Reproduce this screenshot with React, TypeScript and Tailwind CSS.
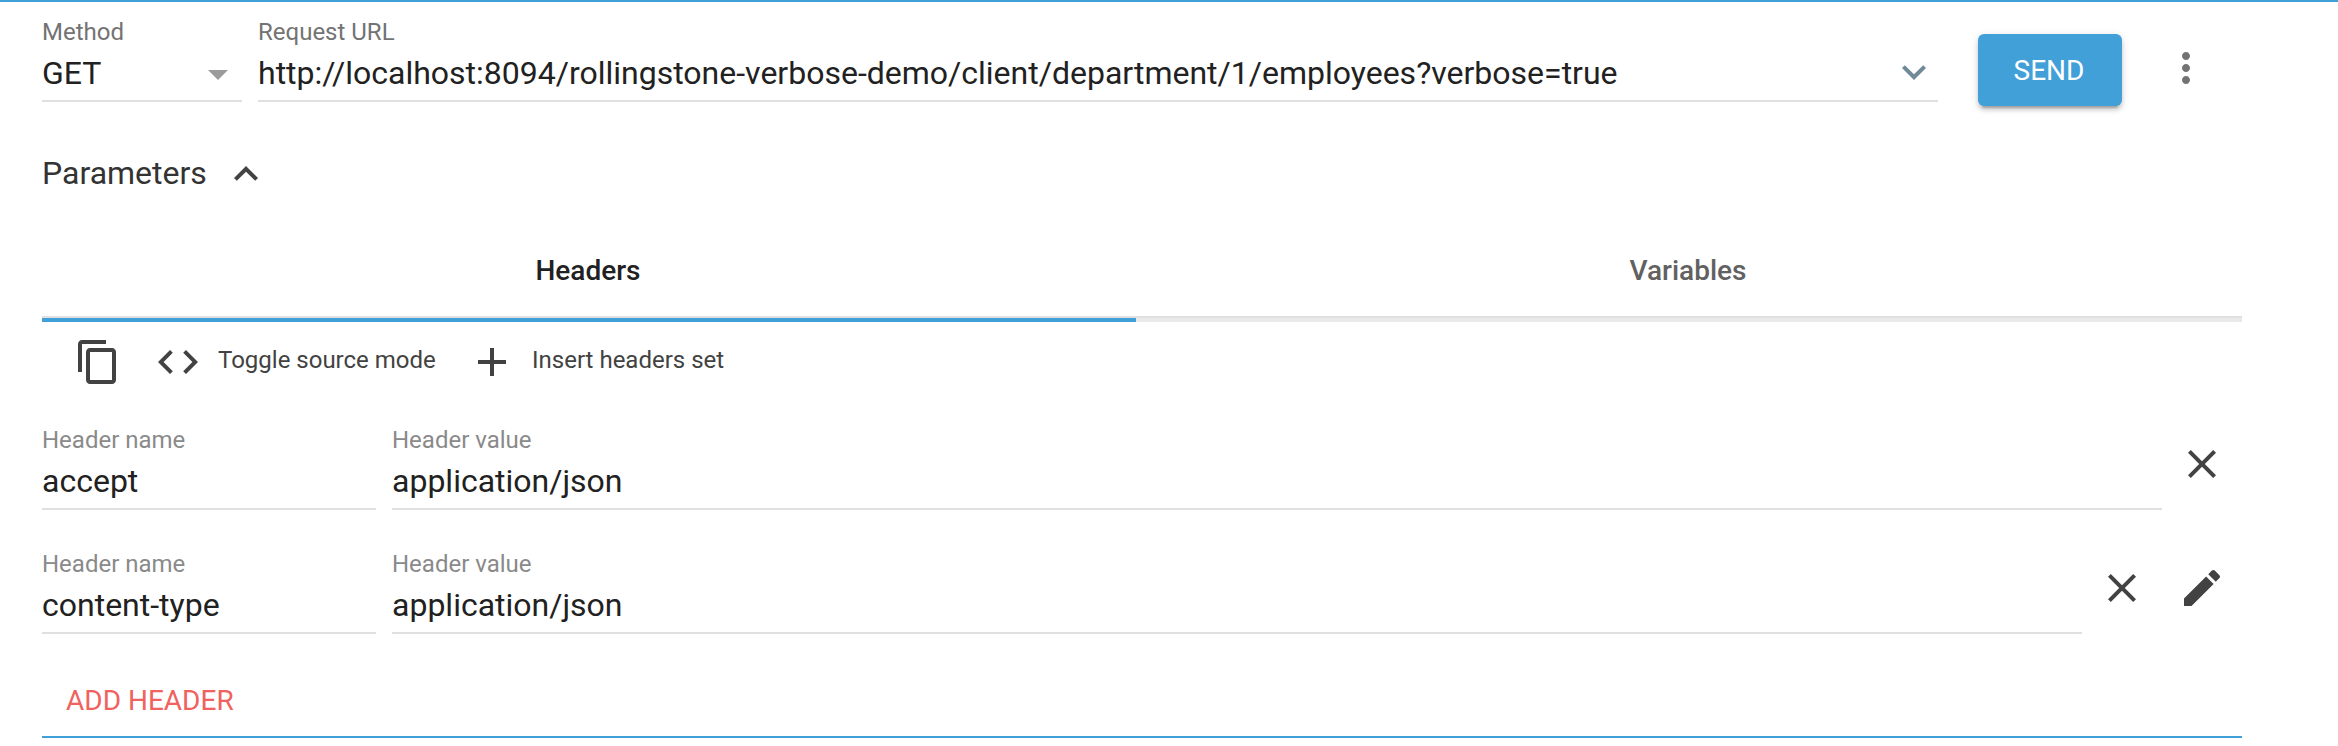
import type { ReactNode } from "react";

const icons = {
  dropDown: "M7 10l5 5 5-5z",
  expandMore: "M16.59 8.59L12 13.17 7.41 8.59 6 10l6 6 6-6z",
  expandLess: "M12 8l-6 6 1.41 1.41L12 10.83l4.59 4.58L18 14z",
  more:
    "M12 8c1.1 0 2-.9 2-2s-.9-2-2-2-2 .9-2 2 .9 2 2 2zm0 2c-1.1 0-2 .9-2 2s.9 2 2 2 2-.9 2-2-.9-2-2-2zm0 6c-1.1 0-2 .9-2 2s.9 2 2 2 2-.9 2-2-.9-2-2-2z",
  copy:
    "M16 1H4c-1.1 0-2 .9-2 2v14h2V3h12V1zm3 4H8c-1.1 0-2 .9-2 2v14c0 1.1.9 2 2 2h11c1.1 0 2-.9 2-2V7c0-1.1-.9-2-2-2zm0 16H8V7h11v14z",
  code:
    "M9.4 16.6L4.8 12l4.6-4.6L8 6l-6 6 6 6 1.4-1.4zm5.2 0l4.6-4.6-4.6-4.6L16 6l6 6-6 6-1.4-1.4z",
  add: "M19 13h-6v6h-2v-6H5v-2h6V5h2v6h6v2z",
  close:
    "M19 6.41L17.59 5 12 10.59 6.41 5 5 6.41 10.59 12 5 17.59 6.41 19 12 13.41 17.59 19 19 17.59 13.41 12z",
  edit:
    "M3 17.25V21h3.75L17.81 9.94l-3.75-3.75L3 17.25zM20.71 7.04c.39-.39.39-1.02 0-1.41l-2.34-2.34c-.39-.39-1.02-.39-1.41 0l-1.83 1.83 3.75 3.75 1.83-1.83z",
};

function Icon({ name, className = "" }: { name: keyof typeof icons; className?: string }) {
  return (
    <svg viewBox="0 0 24 24" className={`size-12 shrink-0 fill-current ${className}`}>
      <path d={icons[name]} />
    </svg>
  );
}

type FieldProps = {
  label: string;
  value: string;
  className: string;
  labelClass?: string;
  children?: ReactNode;
};

function Field({ label, value, className, labelClass = "text-[#737373]", children }: FieldProps) {
  return (
    <div className={`border-b-2 border-[#e0e0e0] pb-[3px] ${className}`}>
      <div className={`text-2xl leading-[34px] ${labelClass}`}>{label}</div>
      <div className="flex h-12 justify-between text-[32px] leading-[48px]">
        <span>{value}</span>
        {children}
      </div>
    </div>
  );
}

function HeaderRow({ name, value, editable }: { name: string; value: string; editable?: boolean }) {
  return (
    <div className="flex h-[87px] w-[2184px]">
      <Field label="Header name" value={name} className="w-[334px]" labelClass="text-[#8a8a8a]" />
      <Field label="Header value" value={value} className="ml-4 flex-1" labelClass="text-[#8a8a8a]" />
      <div className="ml-4 flex gap-8 pt-[17px] text-[#424242]">
        <Icon name="close" />
        {editable && <Icon name="edit" />}
      </div>
    </div>
  );
}

export default function App() {
  return (
    <main className="h-[746px] w-[2338px] overflow-hidden border-t-2 border-[#42a0d9] bg-white pl-[42px] font-['Roboto',sans-serif] text-[#212121]">
      <section className="flex items-start pt-[13px]">
        <Field label="Method" value="GET" className="w-[200px]">
          <Icon name="dropDown" className="mt-px text-[#9b9b9b]" />
        </Field>
        <Field
          label="Request URL"
          value="http://localhost:8094/rollingstone-verbose-demo/client/department/1/employees?verbose=true"
          className="ml-4 w-[1680px]"
        >
          <Icon name="expandMore" className="-mt-px text-[#708a98]" />
        </Field>
        <button className="mt-[19px] ml-10 h-[72px] w-36 rounded-md bg-[#42a0d9] pt-0.5 pr-0.5 text-[28px] leading-[70px] text-white shadow-[0_4px_4px_rgba(0,0,0,0.14),0_2px_10px_rgba(0,0,0,0.12),0_6px_2px_-4px_rgba(0,0,0,0.2)]">
          SEND
        </button>
        <Icon name="more" className="mt-[29px] ml-10 text-[#737373]" />
      </section>

      <section className="mt-11 flex h-12 items-center gap-4 text-[#333333]">
        <h2 className="-mt-0.5 w-[164px] text-[32px] leading-[48px]">Parameters</h2>
        <Icon name="expandLess" className="text-[#424242]" />
      </section>

      <nav className="mt-[22px] flex h-[102px] w-[2200px] text-center text-[28px] font-medium leading-[102px]">
        <div className="h-[102px] w-[1094px] border-b-4 border-[#42a0d9]">
          <div className="h-[98px] border-b-2 border-[#e0e0e0] pr-0.5">Headers</div>
        </div>
        <div className="h-[102px] flex-1 border-b-4 border-[#e8e9e9] text-[#616161]">
          <div className="h-[98px] border-b-2 border-[#e0e0e0] pr-0.5">Variables</div>
        </div>
      </nav>

      <section className="mt-4 flex h-12 pl-8 text-2xl leading-[44px] text-[#424242]">
        <Icon name="copy" />
        <Icon name="code" className="ml-8" />
        <span className="ml-4 w-[218px] whitespace-nowrap">Toggle source mode</span>
        <Icon name="add" className="ml-8" />
        <span className="ml-4">Insert headers set</span>
      </section>

      <section className="mt-[37px] flex flex-col gap-[37px]">
        <HeaderRow name="accept" value="application/json" />
        <HeaderRow name="content-type" value="application/json" editable />
      </section>

      <div className="mt-[30px] h-[74px] w-[2200px] border-b-2 border-[#42a0d9] pl-6 text-[28px] leading-[74px] text-[#f0625d]">
        ADD HEADER
      </div>
    </main>
  );
}
